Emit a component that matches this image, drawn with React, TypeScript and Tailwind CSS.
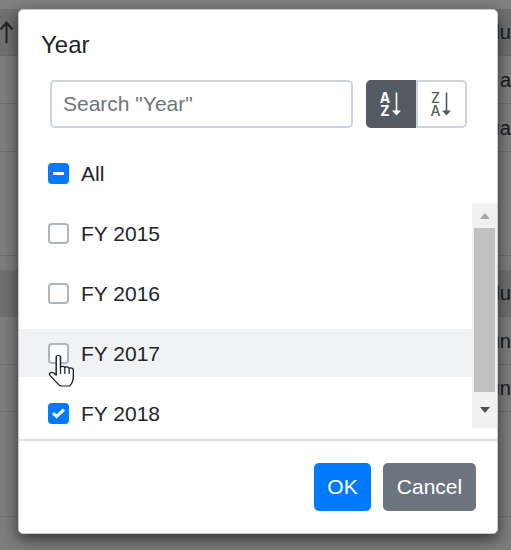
import React from 'react';

const years = [
	{ label: 'FY 2015', state: 'off' },
	{ label: 'FY 2016', state: 'off' },
	{ label: 'FY 2017', state: 'off', hover: true },
	{ label: 'FY 2018', state: 'on' },
];

function Box({ state }: { state: string }) {
	if (state === 'off') {
		return <span className="h-[21px] w-[21px] shrink-0 rounded-[4px] border-2 border-[#adb5bd] bg-white" />;
	}
	return (
		<span className="flex h-[21px] w-[21px] shrink-0 items-center justify-center rounded-[4px] bg-[#007bff]">
			{state === 'mixed' ? (
				<span className="h-[3px] w-[11px] rounded-[1px] bg-white" />
			) : (
				<svg width="15" height="12" viewBox="0 0 15 12">
					<path d="M2 6.2 L5.6 9.4 L13 2.6" fill="none" stroke="#fff" strokeWidth="3" />
				</svg>
			)}
		</span>
	);
}

function SortIcon({ top, bottom, color, bold }: { top: string; bottom: string; color: string; bold?: boolean }) {
	return (
		<span className="flex items-center" style={{ color }}>
			<span className={`flex flex-col items-center text-[14px] leading-[13px] font-['Inter',sans-serif] ${bold ? 'font-bold' : 'font-medium'}`}>
				<span>{top}</span>
				<span>{bottom}</span>
			</span>
			<svg width="11" height="25" viewBox="0 0 11 25" className="ml-px">
				<path d="M5.5 0.5 V21" stroke={color} strokeWidth="1.6" />
				<path d="M1 18.5 H10 L5.5 23.5 Z" fill={color} />
			</svg>
		</span>
	);
}

function Cursor() {
	return (
		<svg width="27" height="33" viewBox="0 0 22 33" preserveAspectRatio="none" className="absolute left-[47px] top-[354px]">
			<path
				d="M7.5 3 C7.5 1 11 1 11 3 V13 C12 12 14 12 14.5 13.5 C15.5 12.5 17.5 12.5 18 14.5 C19 13.5 21.5 14 21.5 16 V23 C21.5 27 20 30 18.5 32 H11 C8 29 5 25 2.5 21.5 C1 19 3.5 17.5 5.5 19 L7.5 21 Z"
				fill="#fff"
				stroke="#1d2130"
				strokeWidth="1.2"
				strokeLinejoin="round"
			/>
			<path d="M11 13 V20 M14.5 13.5 V20 M18 14.5 V20" stroke="#1d2130" strokeWidth="1" />
		</svg>
	);
}

function BackRow({ text, className }: { text?: string; className: string }) {
	return (
		<div className={`flex items-center justify-end border-b border-[#6e6e6e] text-[20px] text-[#1a1a1a] ${className}`}>
			{text && <span className="whitespace-nowrap">{text}</span>}
		</div>
	);
}

export default function App() {
	return (
		<div className="relative h-[550px] w-[511px] overflow-hidden bg-[#7d7d7d] font-['Liberation_Sans',Arial,sans-serif]">
			<div className="h-[9px] bg-[#808080]" />
			<div className="flex h-[47px] items-center justify-between border-b border-[#6a6a6a] bg-[#707070] text-[20px] text-[#1a1a1a]">
				<svg width="15" height="24" viewBox="0 0 15 24">
					<path d="M6.5 23 V2.5 M0.5 9.5 L6.5 2.5 L12.5 9.5" fill="none" stroke="#222" strokeWidth="2" />
				</svg>
				<span>lu</span>
			</div>
			<BackRow text="a" className="h-12" />
			<BackRow text="ua" className="h-12" />
			<BackRow className="h-[104px]" />
			<div className="h-[14px]" />
			<BackRow text="lu" className="h-[47px] bg-[#707070]" />
			<BackRow text="un" className="h-12" />
			<BackRow text="un" className="h-[47px]" />
			<BackRow className="h-[105px]" />

			<div className="absolute left-[18px] top-[9px] flex h-[525px] w-[480px] flex-col rounded-[5px] border border-[#c9c9c9] bg-white text-[#212529] shadow-[0_5px_15px_rgba(0,0,0,0.6)]">
				<div className="h-[46px] pl-[22px] pt-[21px] text-[24px] leading-[28px]">Year</div>
				<div className="flex items-center gap-[13px] pl-[31px] pr-[30px] pt-[24px]">
					<div className="flex h-[48px] w-[303px] items-center rounded-[5px] border-2 border-[#ced4da] pl-[11px] text-[21px] text-[#6c757d]">
						Search "Year"
					</div>
					<div className="flex h-[48px]">
						<div className="flex w-[50px] items-center justify-center rounded-l-[5px] bg-[#535a62]">
							<SortIcon top="A" bottom="Z" color="#ffffff" bold />
						</div>
						<div className="flex w-[51px] items-center justify-center rounded-r-[5px] border-2 border-[#ced4da] bg-white">
							<SortIcon top="Z" bottom="A" color="#535a62" />
						</div>
					</div>
				</div>
				<div className="mb-[6px] mt-[21px] flex h-[48px] items-center gap-[12px] pl-[29px] text-[21px]">
					<Box state="mixed" />
					<span className="pt-px">All</span>
				</div>
				<div className="flex h-[236px] overflow-hidden">
					<div className="w-[453px] pt-[6px]">
						{years.map((y) => (
							<div
								key={y.label}
								className={`mb-[12px] flex h-[48px] items-center gap-[12px] pl-[29px] text-[21px] ${y.hover ? 'bg-[#f1f2f4]' : ''}`}
							>
								<Box state={y.state} />
								<span className="pt-px">{y.label}</span>
							</div>
						))}
					</div>
					<div className="flex h-[225px] w-[25px] flex-col items-center bg-[#f1f1f1] px-[2px]">
						<div className="flex h-[25px] items-center justify-center">
							<span className="h-0 w-0 border-x-[5px] border-b-[6px] border-x-transparent border-b-[#a8a8a8]" />
						</div>
						<div className="h-[164px] w-full bg-[#c1c1c1]" />
						<div className="flex h-[36px] items-center justify-center">
							<span className="h-0 w-0 border-x-[5px] border-t-[6px] border-x-transparent border-t-[#505050]" />
						</div>
					</div>
				</div>
				<div className="flex flex-1 items-center justify-end gap-[12px] border-t-2 border-[#dee2e6] pr-[21px]">
					<button className="h-[48px] w-[57px] rounded-[5px] bg-[#007bff] text-[21px] text-white">OK</button>
					<button className="h-[48px] w-[93px] rounded-[5px] bg-[#6c757d] text-[21px] text-white">Cancel</button>
				</div>
			</div>
			<Cursor />
		</div>
	);
}
